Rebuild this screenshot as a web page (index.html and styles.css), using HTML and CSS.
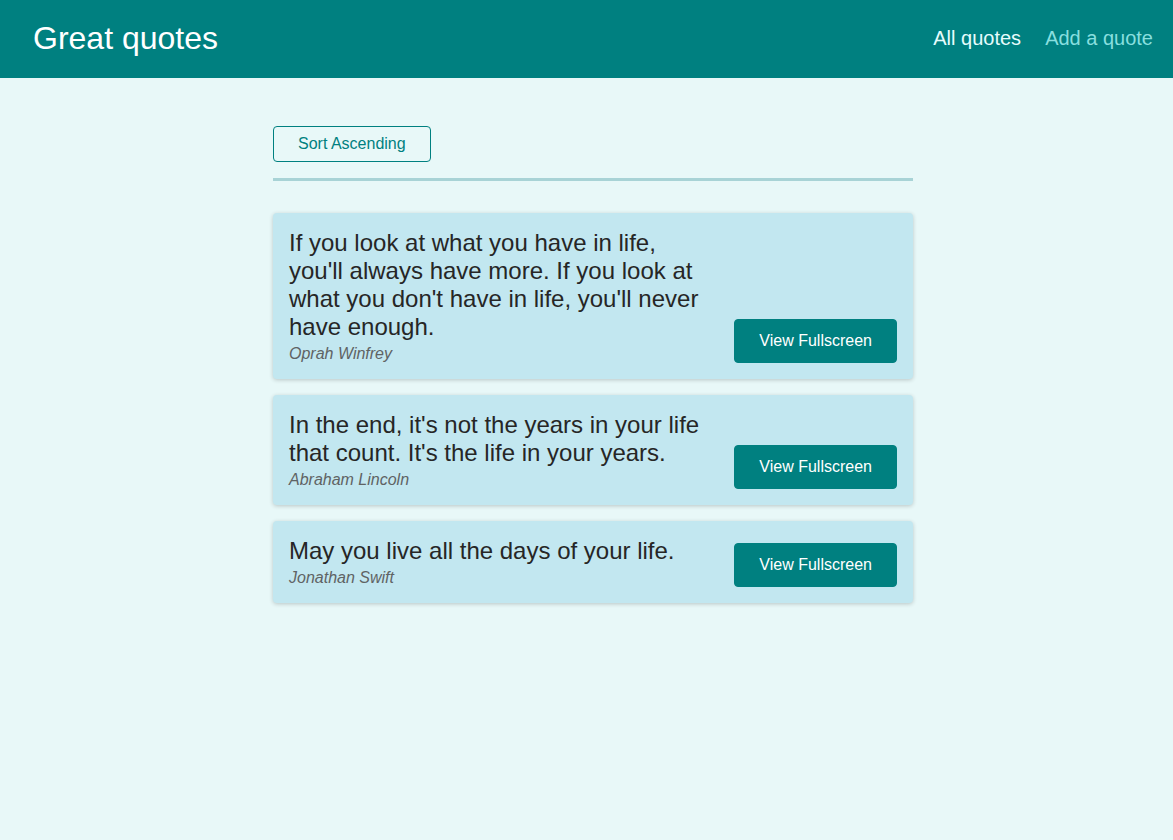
FILE: index.html
```html
<!DOCTYPE html>
<html lang="en">
<head>
<meta charset="utf-8">
<title>Great quotes</title>
<link rel="stylesheet" href="styles.css">
</head>
<body>
<header class="header">
  <div class="logo">Great quotes</div>
  <nav class="nav">
    <ul class="nav-list">
      <li><a href="#" class="nav-link active">All quotes</a></li>
      <li><a href="#" class="nav-link">Add a quote</a></li>
    </ul>
  </nav>
</header>
<main class="main">
  <div class="sorting">
    <button class="sort-btn">Sort Ascending</button>
  </div>
  <ul class="quote-list">
    <li class="item">
      <figure class="quote">
        <blockquote class="quote-text">If you look at what you have in life, you'll always have more. If you look at what you don't have in life, you'll never have enough.</blockquote>
        <figcaption class="quote-author">Oprah Winfrey</figcaption>
      </figure>
      <a href="#" class="btn">View Fullscreen</a>
    </li>
    <li class="item">
      <figure class="quote">
        <blockquote class="quote-text">In the end, it's not the years in your life that count. It's the life in your years.</blockquote>
        <figcaption class="quote-author">Abraham Lincoln</figcaption>
      </figure>
      <a href="#" class="btn">View Fullscreen</a>
    </li>
    <li class="item">
      <figure class="quote">
        <blockquote class="quote-text">May you live all the days of your life.</blockquote>
        <figcaption class="quote-author">Jonathan Swift</figcaption>
      </figure>
      <a href="#" class="btn">View Fullscreen</a>
    </li>
  </ul>
</main>
</body>
</html>
```
FILE: styles.css
```css
* { box-sizing: border-box; }

html, body {
  margin: 0;
  padding: 0;
}

body {
  background-color: #e8f8f8;
  font-family: "Liberation Sans", Arial, sans-serif;
  min-height: 840px;
}

.header {
  height: 78px;
  display: flex;
  align-items: center;
  justify-content: space-between;
  background-color: #008080;
  padding: 0 20px 2px 33px;
}

.logo {
  font-size: 32px;
  color: #ffffff;
}

.nav-list {
  list-style: none;
  margin: 0;
  padding: 0;
  display: flex;
  gap: 24px;
}

.nav-link {
  text-decoration: none;
  font-size: 20px;
  color: #88dfdf;
}

.nav-link.active {
  color: #e6fcfc;
}

.main {
  width: 640px;
  margin: 48px 0 0 273px;
}

.sorting {
  padding-bottom: 16px;
  border-bottom: 3px solid #a8d3d6;
  margin-bottom: 32px;
}

.sort-btn {
  font: inherit;
  font-size: 16px;
  line-height: 18px;
  padding: 8px 24px;
  color: #008080;
  border: 1px solid #008080;
  background: transparent;
  border-radius: 4px;
  cursor: pointer;
  display: block;
}

.quote-list {
  list-style: none;
  margin: 0;
  padding: 0;
  display: flex;
  flex-direction: column;
  gap: 16px;
}

.item {
  display: flex;
  justify-content: space-between;
  align-items: flex-end;
  gap: 24px;
  background-color: #c2e7f0;
  padding: 16px;
  border-radius: 4px;
  box-shadow: 0 1px 4px rgba(0, 0, 0, 0.2);
}

.quote {
  margin: 0;
  display: flex;
  flex-direction: column;
  gap: 4px;
}

.quote-text {
  margin: 0;
  font-size: 24px;
  line-height: 28px;
  color: #262626;
}

.quote-author {
  font-style: italic;
  font-size: 16px;
  line-height: 18px;
  color: #5f6364;
}

.btn {
  flex-shrink: 0;
  text-decoration: none;
  font-size: 16px;
  line-height: 18px;
  padding: 12px 24px;
  border: 1px solid #008080;
  border-radius: 4px;
  background-color: #008080;
  color: #ffffff;
}
```
